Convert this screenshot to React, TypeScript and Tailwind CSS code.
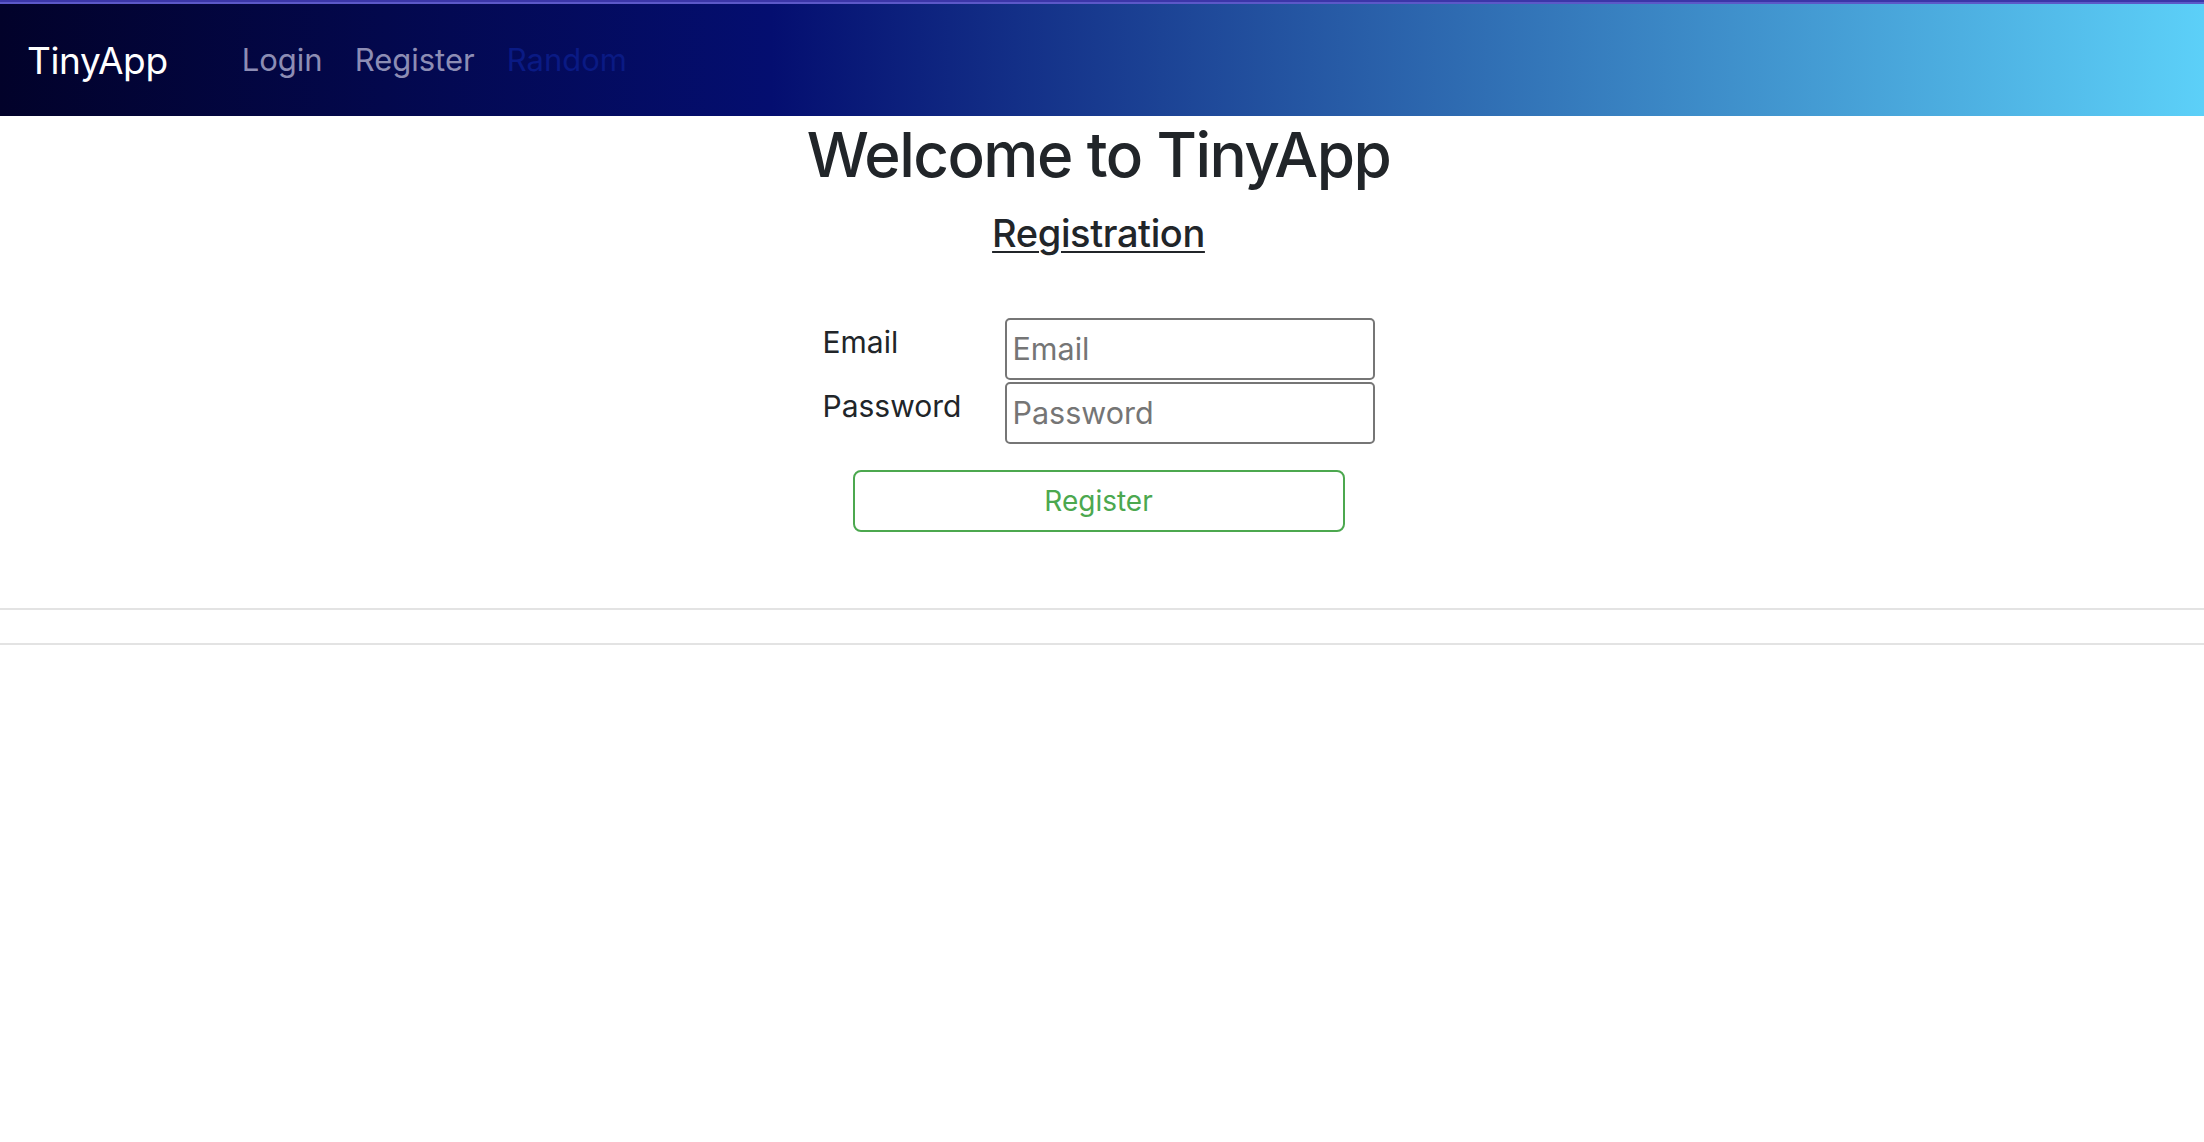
const navLinks = [
  { label: "Login", color: "text-[#8d8db4]" },
  { label: "Register", color: "text-[#8d8db4]" },
  { label: "Random", color: "text-[#0a1a84]" },
];

const App = () => {
  return (
    <div className="min-h-screen bg-white font-['Inter','Liberation_Sans',sans-serif] text-[#212529]">
      <nav className="border-t-2 border-[#3b36a8] bg-[linear-gradient(90deg,#02022a_0%,#040e70_35%,#5cd0f8_100%)]">
        <div className="h-[2px] bg-[#5c58c8]" />
        <div className="flex h-[112px] items-center pl-[27px]">
          <a href="#" className="text-[37px] leading-none tracking-[-0.01em] text-white">
            TinyApp
          </a>
          <ul className="ml-[58px] flex">
            {navLinks.map((link) => (
              <li key={link.label}>
                <a href="#" className={`px-4 text-[31px] leading-none ${link.color}`}>
                  {link.label}
                </a>
              </li>
            ))}
          </ul>
        </div>
      </nav>

      <main className="flex flex-col items-center pr-[7px]">
        <h1 className="mt-[2px] text-[62px] font-medium leading-[1.2] tracking-[-0.025em]">
          Welcome to TinyApp
        </h1>
        <h3 className="mt-[19px] text-[38px] font-medium leading-[1.2] tracking-[-0.01em] underline decoration-2 underline-offset-4">
          Registration
        </h3>

        <form className="mt-[61px] flex flex-col items-center">
          <div className="grid grid-cols-[182px_370px] gap-y-[2px]">
            <label className="text-[30px] leading-[1.6]">Email</label>
            <input
              type="email"
              placeholder="Email"
              className="h-[62px] rounded-[5px] border-2 border-[#767676] px-[6px] text-[30.5px] outline-none placeholder:text-[#757575]"
            />
            <label className="text-[30px] leading-[1.6]">Password</label>
            <input
              type="password"
              placeholder="Password"
              className="h-[62px] rounded-[5px] border-2 border-[#767676] px-[6px] text-[30.5px] outline-none placeholder:text-[#757575]"
            />
          </div>
          <button
            type="button"
            className="mt-[26px] h-[62px] w-[492px] rounded-[8px] border-2 border-[#4ca84f] text-[28px] text-[#4ca84f]"
          >
            Register
          </button>
        </form>
      </main>

      <hr className="mt-[76px] border-t-2 border-[#e3e3e3]" />
      <hr className="mt-[33px] border-t-2 border-[#e3e3e3]" />
    </div>
  );
};

export default App;
